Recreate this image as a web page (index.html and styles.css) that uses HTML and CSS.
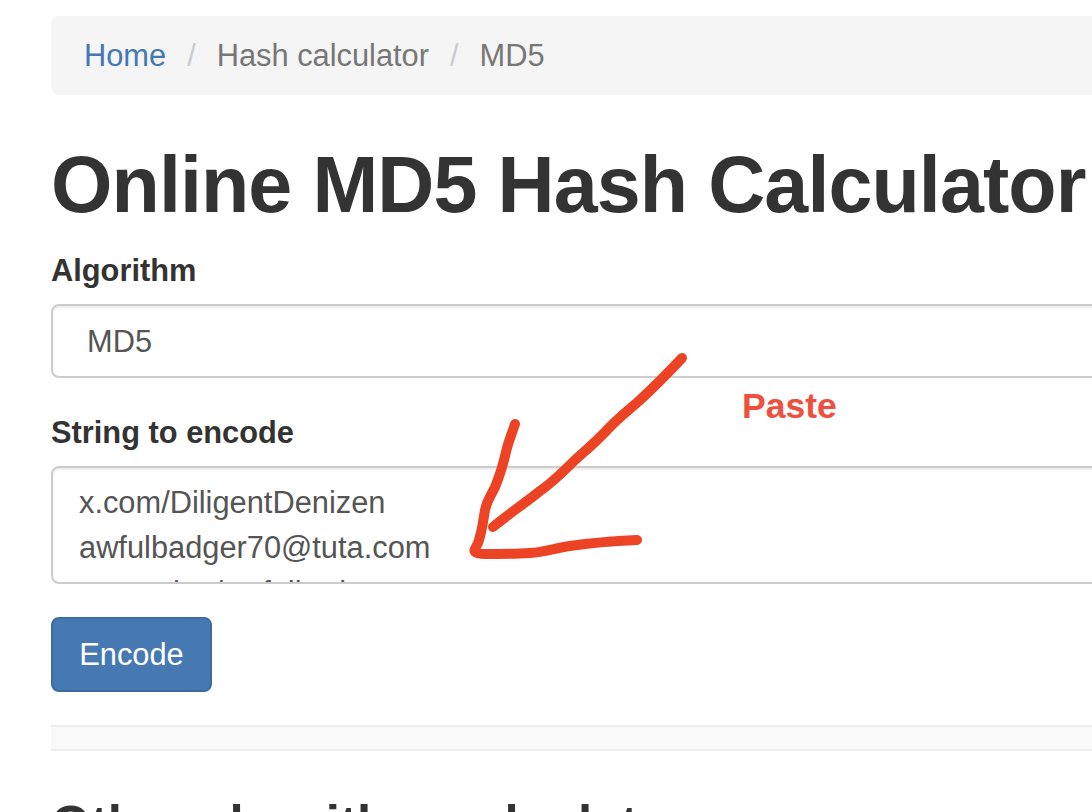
FILE: index.html
```html
<!DOCTYPE html>
<html lang="en">
<head>
    <meta charset="UTF-8">
    <meta name="viewport" content="width=device-width, initial-scale=1.0">
    <title>Online MD5 Hash Calculator</title>
    <link rel="stylesheet" href="styles.css">
</head>
<body>
    <main class="container">
        <nav class="breadcrumb">
            <a href="#">Home</a>
            <span class="sep">/</span>
            <span>Hash calculator</span>
            <span class="sep">/</span>
            <span>MD5</span>
        </nav>

        <h1>Online MD5 Hash Calculator</h1>

        <form class="hash-form">
            <div class="form-group">
                <label>Algorithm</label>
                <div class="form-control select-box">MD5</div>
            </div>
            <div class="form-group">
                <label>String to encode</label>
                <div class="form-control text-box">x.com/DiligentDenizen<br>awfulbadger70@tuta.com<br>mastodon/awfulbadger</div>
            </div>
            <button type="button" class="btn">Encode</button>
        </form>

        <hr class="divider">

        <h2>Other algorithm calculators</h2>
    </main>

    <!-- hand-drawn annotation on top of the page -->
    <svg class="annotation" width="1092" height="812" viewBox="0 0 1092 812">
        <path d="M682 358C668 373 653 388 640 400C630 409 618 418 607 430C597 441 585 451 575 460C563 472 553 482 540 491C525 503 510 513 493 527"/>
        <path d="M515 424C511 436 508 443 506 452C503 465 500 475 495 487C491 496 487 500 485 510C483 522 482 532 478 543C476 548 473 550 475 552C477 554 481 554 485 554C500 554 515 554 530 553C545 552 555 548 570 546C590 543 615 541 637 540"/>
    </svg>
    <div class="paste-note">Paste</div>
</body>
</html>
```

FILE: styles.css
```css
* {
    box-sizing: border-box;
    margin: 0;
    padding: 0;
}

html, body {
    height: 812px;
    overflow: hidden;
}

body {
    font-family: "Liberation Sans", Arial, sans-serif;
    font-size: 30.8px;
    color: #333;
    background-color: #fff;
}

.container {
    width: 1400px;
    padding: 16px 0 0 51px;
}

.breadcrumb {
    display: flex;
    align-items: center;
    height: 79px;
    padding: 0 33px;
    gap: 21px;
    background-color: #f5f5f5;
    border-radius: 8px;
    color: #777;
    margin-bottom: 46px;
}

.breadcrumb a {
    color: #4279b3;
    text-decoration: none;
}

.sep {
    color: #ccc;
}

h1 {
    font-size: 79px;
    font-weight: 700;
    letter-spacing: -0.9px;
    line-height: 87px;
    margin-bottom: 21px;
}

h2 {
    font-size: 51px;
    font-weight: 700;
    line-height: 56px;
    margin-top: 46px;
}

.form-group {
    margin-bottom: 33px;
}

label {
    display: block;
    font-weight: 700;
    line-height: 44px;
    margin-bottom: 11px;
}

.form-control {
    border: 2px solid #ccc;
    border-radius: 8px;
    color: #555;
    background-color: #fff;
    box-shadow: inset 0 2px 2px rgba(0,0,0,0.075);
}

.select-box {
    height: 74px;
    padding: 0 34px;
    line-height: 72px;
}

.text-box {
    height: 118px;
    padding: 12px 26px;
    line-height: 45px;
    overflow: hidden;
}

.btn {
    display: block;
    width: 161px;
    height: 75px;
    font-family: inherit;
    font-size: 30.8px;
    color: #fff;
    background-color: #4679b1;
    border: 2px solid #3e6ca0;
    border-radius: 8px;
}

.divider {
    border: 0;
    border-top: 2px solid #eee;
    border-bottom: 2px solid #eee;
    background-color: #f9f9f9;
    height: 26px;
    margin-top: 33px;
}

.annotation {
    position: absolute;
    left: 0;
    top: 0;
    fill: none;
    stroke: #ec4325;
    stroke-width: 10;
    stroke-linecap: round;
    stroke-linejoin: round;
}

.paste-note {
    position: absolute;
    left: 742px;
    top: 386px;
    font-size: 35.5px;
    font-weight: 700;
    color: #ee4f3e;
}
```
